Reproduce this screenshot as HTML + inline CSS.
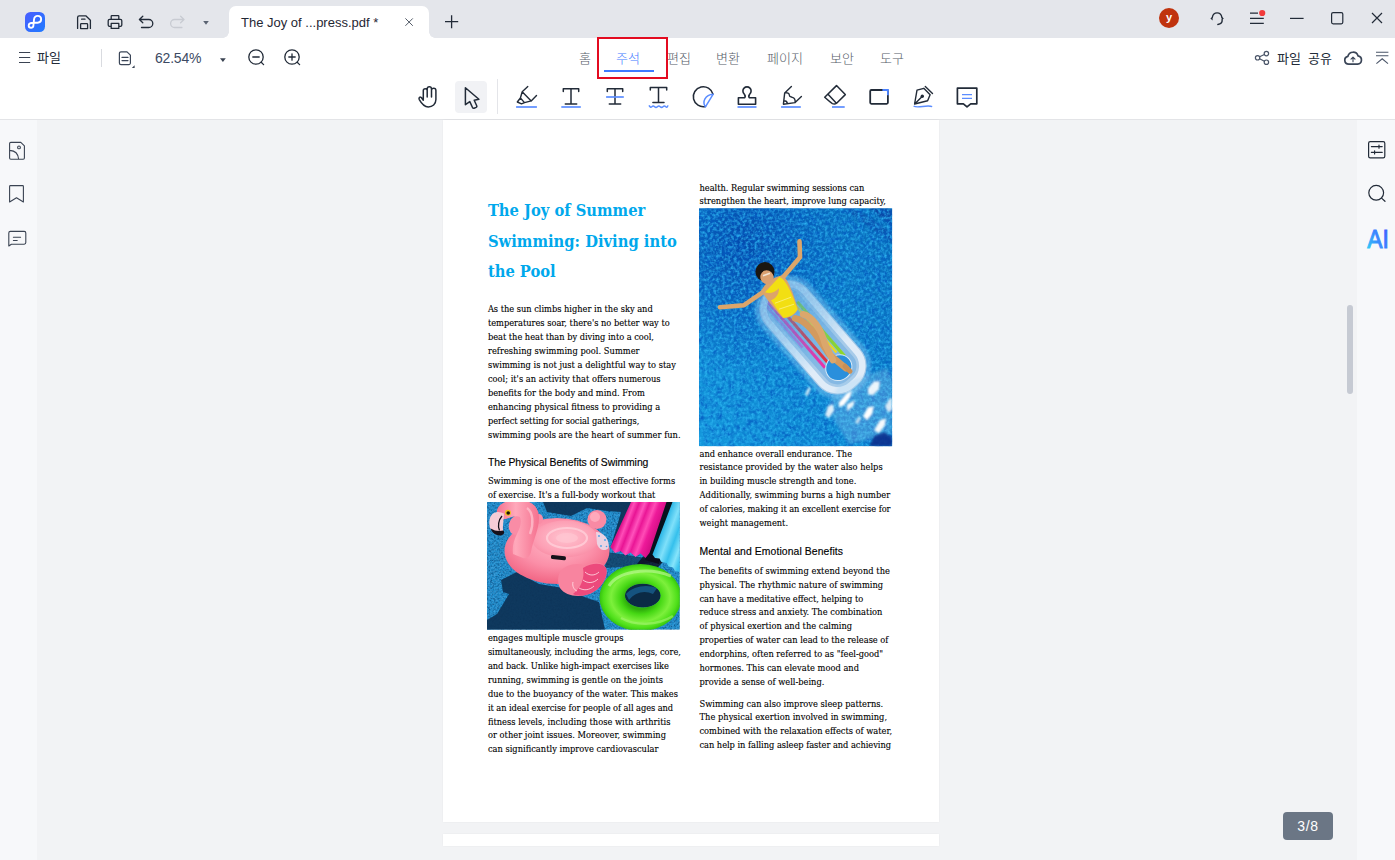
<!DOCTYPE html>
<html lang="ko">
<head>
<meta charset="utf-8">
<title>The Joy of Summer Swimming - PDF</title>
<style>
*{box-sizing:border-box;margin:0;padding:0}
html,body{width:1395px;height:860px;overflow:hidden;background:#f2f3f5}
body{position:relative;font-family:"Liberation Sans","Noto Sans CJK KR",sans-serif;color:#222b38}
.abs{position:absolute}
svg{position:absolute;overflow:visible}
svg svg{position:static;overflow:hidden}
.ic{fill:none;stroke:#222b38;stroke-width:1.5;stroke-linecap:round;stroke-linejoin:round}
.bl{fill:none;stroke:#5b8dff;stroke-width:1.7;stroke-linecap:butt;stroke-linejoin:round}
#titlebar{left:0;top:0;width:1395px;height:38px;background:#e4e6eb}
#tab{left:229px;top:6px;width:200px;height:32px;background:#fff;border-radius:7px 7px 0 0}
#tab:before,#tab:after{content:"";position:absolute;bottom:0;width:6px;height:6px;background:radial-gradient(circle at 0 0,rgba(255,255,255,0) 5.5px,#fff 6px)}
#tab:before{left:-6px}
#tab:after{right:-6px;background:radial-gradient(circle at 100% 0,rgba(255,255,255,0) 5.5px,#fff 6px)}
#tabtitle{left:241px;top:15px;font-size:13px;line-height:16px;color:#1f2733;white-space:nowrap}
#menubar{left:0;top:38px;width:1395px;height:81px;background:#fff}
#tbline{left:0;top:119px;width:1395px;height:1px;background:#e3e4e7}
#leftbar{left:0;top:120px;width:37px;height:740px;background:#f7f8fa}
#rightbar{left:1357px;top:120px;width:38px;height:740px;background:#f7f8fa}
.ko{font-family:"Liberation Sans","Noto Sans CJK KR",sans-serif;font-size:13px;line-height:16px;white-space:nowrap}
.menu{top:51px;color:#555c68;font-weight:300}
#page{left:443px;top:120px;width:496.4px;height:702px;background:#fff;box-shadow:0 0 2px rgba(0,0,0,.05)}
#page2{left:443px;top:834px;width:496.4px;height:12px;background:#fff;box-shadow:0 0 2px rgba(0,0,0,.05)}
#scroll{left:1347px;top:305px;width:6px;height:89px;border-radius:3px;background:#c6cad3}
#badge{left:1283px;top:812px;width:50px;height:28px;border-radius:4px;background:#6b7685;color:#fff;font-size:14px;line-height:28px;text-align:center;letter-spacing:.6px}
#redbox{left:597px;top:37px;width:71px;height:42px;border:2px solid #e30b20}
#selbg{left:455px;top:81px;width:32px;height:32px;border-radius:4px;background:#f1f2f5}
#tsep{left:497px;top:79px;width:1px;height:35px;background:#e4e5e9}
#msep{left:101px;top:49px;width:1px;height:18px;background:#d9dbe0}
#avatar{left:1159px;top:8px;width:20px;height:20px;border-radius:50%;background:#c0330e;color:#fff;font-size:11px;font-weight:bold;line-height:18px;text-align:center}
</style>
</head>
<body>
<div id="titlebar" class="abs"></div>
<div id="tab" class="abs"></div>
<div id="tabtitle" class="abs">The Joy of ...press.pdf *</div>
<div id="menubar" class="abs"></div>
<div id="tbline" class="abs"></div>
<div id="leftbar" class="abs"></div>
<div id="rightbar" class="abs"></div>
<div id="page" class="abs"></div>
<div id="page2" class="abs"></div>
<div id="scroll" class="abs"></div>
<div id="badge" class="abs">3/8</div>
<div id="avatar" class="abs">y</div>
<div id="msep" class="abs"></div>
<div id="selbg" class="abs"></div>
<div id="tsep" class="abs"></div>

<!-- menu labels -->
<div class="abs ko" style="left:37px;top:50px;color:#222b38">파일</div>
<div class="abs" style="left:155px;top:49px;font-size:14px;line-height:18px;letter-spacing:-.2px;color:#3c4a63">62.54%</div>
<div class="abs ko menu" style="left:579px">홈</div>
<div class="abs ko menu" style="left:616px;color:#3f7bff">주석</div>
<div class="abs" style="left:604px;top:70px;width:50px;height:2px;background:#3f7bff"></div>
<div class="abs ko menu" style="left:667px">편집</div>
<div class="abs ko menu" style="left:716px">변환</div>
<div class="abs ko menu" style="left:767px">페이지</div>
<div class="abs ko menu" style="left:830px">보안</div>
<div class="abs ko menu" style="left:880px">도구</div>
<div class="abs ko" style="left:1277px;top:51px;color:#222b38;word-spacing:3.5px">파일 공유</div>
<div id="redbox" class="abs"></div>

<!--ICONS_START-->
<svg id="topicons" width="1395" height="120" viewBox="0 0 1395 120" style="left:0;top:0">
<defs>
<linearGradient id="lg" x1="0" y1="0" x2="1" y2="1"><stop offset="0" stop-color="#4a5dff"/><stop offset="1" stop-color="#1f7bff"/></linearGradient>
<linearGradient id="aig" x1="1" y1=".2" x2="0" y2="1"><stop offset="0" stop-color="#3d5cff"/><stop offset=".45" stop-color="#3a86ff"/><stop offset=".8" stop-color="#34b8f8"/><stop offset="1" stop-color="#2fe0f0"/></linearGradient>
</defs>
<!-- logo -->
<rect x="25" y="12" width="20" height="20" rx="5.5" fill="url(#lg)"/>
<path d="M33.4 25.4C33.4 28.6 28.7 28.4 28.7 25.4C28.7 23.2 30.8 22.7 33.4 22.7L37.6 22.7C42.3 22.7 42.3 15.9 37.8 15.9C35 15.9 34.2 17.6 34 19.6Z" fill="none" stroke="#fff" stroke-width="1.9" stroke-linejoin="round"/>
<!-- save -->
<path class="ic" d="M77.6 28.4V17.4a1.6 1.6 0 0 1 1.6-1.6h6.6l4.6 4.4v8.2" style="stroke-width:1.3"/>
<path class="ic" d="M80.6 28.6v-4.2a.8.8 0 0 1 .8-.8h5.4a.8.8 0 0 1 .8.8v4.2zM81.6 19.2h3.4" style="stroke-width:1.3"/>
<!-- print -->
<path class="ic" d="M111.2 19.4v-3.2a.6.6 0 0 1 .6-.6h6.4a.6.6 0 0 1 .6.6v3.2M111 26.4h-1.4a1.4 1.4 0 0 1-1.4-1.4v-4.2a1.4 1.4 0 0 1 1.4-1.4h10.800000000000001a1.4 1.4 0 0 1 1.4 1.4v4.200000000000001a1.4 1.4 0 0 1-1.4 1.4h-1.4M111.2 23.4h7.6v5h-7.6z" style="stroke-width:1.3"/>
<!-- undo -->
<path class="ic" d="M142.8 16.2l-3.4 3.3 3.4 3.3M139.600 19.5h9.200a4 4 0 0 1 0 8h-7.300" style="stroke-width:1.3"/>
<!-- redo (disabled) -->
<path class="ic" d="M180.6 16.2l3.4 3.3-3.4 3.3M183.8 19.5h-9.200a4 4 0 0 0 0 8h7.300" style="stroke:#c8cbd2;stroke-width:1.3"/>
<path d="M203.200 21.100h5.600l-2.800 3.700z" fill="#5a6372"/>
<!-- tab close, plus -->
<path d="M405.400 18.400l7.400 7.400M412.800 18.400l-7.400 7.400" stroke="#4a5260" stroke-width=".95" fill="none"/>
<path d="M445 21.700h13.200M451.600 15.200v13" stroke="#222b38" stroke-width="1.300" fill="none"/>
<!-- headset -->
<path class="ic" d="M1212.300 17.400a4.900 5.600 0 0 1 9.600 0M1222.200 19.800c.2 2.600-1.600 4.400-4.400 4.700" style="stroke-width:1.300"/>
<path d="M1212.600 16.600l-2.200 1.900 2.200 1.900zM1221.600 16.600l2.200 1.900-2.200 1.900z" fill="#222b38"/>
<!-- menu -->
<path d="M1250 13.200h8M1250 18.300h13.800M1250 23.400h13.800" stroke="#222b38" stroke-width="1.300" fill="none"/>
<circle cx="1262.200" cy="13" r="3.100" fill="#f23b3b"/>
<!-- window controls -->
<path d="M1290 18.400h13.600" stroke="#222b38" stroke-width="1.200" fill="none"/>
<rect x="1331.600" y="12.600" width="11.200" height="11.200" rx="1.500" fill="none" stroke="#222b38" stroke-width="1.200"/>
<path d="M1372 13l10 10M1382 13l-10 10" stroke="#222b38" stroke-width="1.200" fill="none"/>

<!-- hamburger -->
<path d="M19 52.500h11.200M19 57.500h11.200M19 62.500h11.200" stroke="#3a4352" stroke-width="1.100" fill="none"/>
<!-- page icon -->
<path class="ic" d="M119.400 53.400a1.600 1.600 0 0 1 1.600-1.600h6l3.400 3.400v7.800a1.600 1.600 0 0 1-1.600 1.600h-7.800a1.600 1.600 0 0 1-1.600-1.600zM122 57.400h6M122 60.600h6" style="stroke:#3a4557;stroke-width:1.200"/>
<path d="M134.600 65.200v2.800h-2.800z" fill="#3a4557"/>
<path d="M220 58.200h5.800l-2.900 3.700z" fill="#3a4352"/>
<!-- zoom out / in -->
<circle cx="256" cy="57" r="7.200" class="ic" style="stroke-width:1.300"/>
<path class="ic" d="M261.200 62.300l2.400 2.300M252.800 57h6.400" style="stroke-width:1.300"/>
<circle cx="292" cy="57" r="7.200" class="ic" style="stroke-width:1.300"/>
<path class="ic" d="M297.200 62.300l2.400 2.300M288.800 57h6.400M292 53.800v6.400" style="stroke-width:1.300"/>
<!-- share -->
<g class="ic" style="stroke:#4a5568;stroke-width:1.200"><circle cx="1266.400" cy="53.600" r="2.200"/><circle cx="1257.600" cy="57.800" r="2.200"/><circle cx="1266.400" cy="62.200" r="2.200"/><path d="M1259.600 56.800l4.800-2.300M1259.600 58.800l4.800 2.400"/></g>
<!-- cloud -->
<path class="ic" d="M1348.800 64.200a4 4 0 0 1-.9-7.900a5.300 5.300 0 0 1 10.200-.4a4.200 4.200 0 0 1-.5 8.300z" style="stroke:#3a4557;stroke-width:1.700"/>
<path class="ic" d="M1353 61.800v-4.200M1351 59.200l2-2 2 2" style="stroke:#3a4557;stroke-width:1.100"/>
<!-- collapse -->
<path d="M1376 52.300h12.400M1376 55.700h12.400M1376.400 63.600l5.800-4.800 5.800 4.800" stroke="#4a5568" stroke-width="1.100" fill="none"/>

<!-- hand -->
<path class="ic" d="M423.300 99.400V90.600a1.950 1.950 0 0 1 3.900 0V89a2.150 2.150 0 0 1 4.300 0V90.400a2.200 2.200 0 0 1 4.400 0V99.400C435.900 104.200 432.400 106.900 428.300 106.900C424.200 106.900 422 104.400 419.300 99.600C418.300 97.600 420.300 96.200 421.500 97.800L423.300 100.200M427.200 90.600V97M431.500 89.400V97" style="stroke-width:1.500"/>
<!-- pointer -->
<path class="ic" d="M465.400 87.700L465.400 104.700L469.800 101.600L472.500 107.500Q473 108.600 474.100 108.200L476.100 107.400Q477.200 106.900 476.700 105.800L474.200 100.300L478.900 99.300Z" style="stroke-width:1.500"/>
<!-- highlighter -->
<path class="ic" d="M527.800 86.600L522.200 91.700L531.200 100.900L536.500 95.400M522.200 91.700L520.400 98L524.500 102.600L531.200 100.900M520.400 98L517.300 102L521.500 103.800L524.500 102.600" style="stroke-width:1.400"/>
<path class="bl" d="M516.100 107h20.800"/>
<!-- underline T -->
<path class="ic" d="M563.300 91.400V88.800H578.700V91.400M571 88.800V104M565.300 104H576.700" style="stroke-width:1.500"/>
<path class="bl" d="M561.300 107h19.500"/>
<!-- strike T -->
<path class="ic" d="M607.300 91.400V88.800H622.700V91.400M615 88.800V104M609.300 104H620.700" style="stroke-width:1.500"/>
<path class="bl" d="M606.100 97h17.700"/>
<!-- squiggly T -->
<path class="ic" d="M650.300 90V87.400H666.700V90M658.500 87.400V102.600M652.900 102.600H664" style="stroke-width:1.500"/>
<path class="bl" d="M649 105.400q1.400 2.600 2.800 1.300t2.800 0q1.400 1.300 2.800 0t2.800 0q1.400 1.300 2.800 0t2.800 0q1.400 1.300 2.200-1.300" style="stroke-width:1.500"/>
<!-- sticker -->
<path class="ic" d="M713 94.300A10 10 0 1 0 705.500 106.500" style="stroke-width:1.500"/>
<path class="bl" d="M713.200 94.200L705.400 106.900C702 102 705 94.600 713.200 94.200Z" style="stroke-width:1.500"/>
<!-- stamp -->
<path class="ic" d="M744.600 97.800C746 96 745.200 95.200 744.200 94A4.100 4.100 0 1 1 749.800 94C748.800 95.200 748 96 749.400 97.800H755.600V104.200H738.400V97.800Z" style="stroke-width:1.600"/>
<path class="bl" d="M737.500 107h19"/>
<!-- pencil -->
<path class="ic" d="M791.400 86.600L784.700 92.900L783.400 104.200L795.100 102.600L801.400 96.600M784.700 92.900C787.500 92.300 789.300 93.200 789.300 95C789.300 97.200 791 96.800 792.400 97.300C794.800 98 795.400 100 795.100 102.600M784 100.800C785.800 100.800 787.200 102 787.400 103.600" style="stroke-width:1.400"/>
<path class="bl" d="M781.100 107h19.700"/>
<!-- eraser -->
<path class="ic" d="M836.500 85.600L845.300 94.600L836.600 103.200Q834.600 104.600 832.400 103.600Q831 102.900 824.700 97.300ZM828.500 94.800L836.400 103.200" style="stroke-width:1.500"/>
<path class="bl" d="M832 107h12.700"/>
<!-- rectangle -->
<rect x="870.200" y="90" width="17.700" height="13.800" rx="1.200" class="ic" style="stroke-width:1.800"/>
<path d="M882.400 90H887.900V95.200" fill="none" stroke="#4b82ff" stroke-width="1.800"/>
<!-- pen -->
<path class="ic" d="M914.600 104L917 90.200L923.800 88.300L930.100 94.800L927.600 100.800ZM914.900 103.700L921.400 97.200M925.300 86.400L932.500 93.400" style="stroke-width:1.400"/>
<circle cx="922.300" cy="96.200" r="1.700" fill="#222b38"/>
<path class="bl" d="M913.600 106.200C918 108.400 927 104.600 932.200 106.600" style="stroke-width:1.400"/>
<!-- comment -->
<path class="ic" d="M957.400 88.200H976.800V103.800H970.700L967 106.800L963.400 103.800H957.400Z" style="stroke-width:1.700"/>
<path class="bl" d="M962 94.600h10M962 98.300h10" style="stroke-width:1.300"/>
</svg>

<svg id="sideicons" width="1395" height="140" viewBox="0 130 1395 140" style="left:0;top:130px">
<!-- thumbnails -->
<path class="ic" d="M9.600 143.600a1.200 1.200 0 0 1 1.200-1.200h10l3.600 3.400v12.200a1.200 1.200 0 0 1-1.200 1.200h-12.400a1.200 1.200 0 0 1-1.200-1.200zM9.800 150.400c5 .4 8.400 3.800 8.800 8.600" style="stroke:#3a4352;stroke-width:1.100"/>
<circle cx="19" cy="147.400" r="1.400" class="ic" style="stroke:#3a4352;stroke-width:1.100"/>
<!-- bookmark -->
<path class="ic" d="M9.600 186.400a.8.800 0 0 1 .8-.8h12.200a.8.800 0 0 1 .8.800v15.600l-6.900-4.200-6.900 4.200z" style="stroke:#3a4352;stroke-width:1.100"/>
<!-- comment -->
<path class="ic" d="M8.800 233a1.600 1.600 0 0 1 1.600-1.600h13.800a1.600 1.600 0 0 1 1.600 1.600v9.600a1.600 1.600 0 0 1-1.600 1.600h-12.800l-2.600 1.800zM13.400 237.300h7.200M13.400 240.500h3.800" style="stroke:#3a4352;stroke-width:1.100"/>
<!-- settings -->
<rect x="1368.600" y="141.600" width="16.200" height="16.200" rx="1.600" class="ic" style="stroke-width:1.200"/>
<path class="ic" d="M1371.400 146.600h10.800M1379 145v3.200M1371.400 152.400h10.800M1374.600 150.800v3.200" style="stroke-width:1.200"/>
<!-- search -->
<circle cx="1376.200" cy="192.800" r="7.400" class="ic" style="stroke-width:1.200"/>
<path class="ic" d="M1381.800 198.400l3.200 2.900" style="stroke-width:1.200"/>
<!-- AI -->
<text x="1367.300" y="247.800" font-family="'Liberation Sans',sans-serif" font-size="26.500" fill="url(#aig)" stroke="url(#aig)" stroke-width="1" textLength="21.500" lengthAdjust="spacingAndGlyphs">AI</text>
</svg>

<!--ICONS_END-->
<!--PAGECONTENT_START-->
<svg id="pagesvg" width="496.4" height="702" viewBox="443 120 496.4 702" style="left:443px;top:120px">
<style>.b{font-family:'DejaVu Serif','Liberation Serif',serif;font-size:8.3px;fill:#000;stroke:#000;stroke-width:.12px}.h{font-family:"Liberation Sans",sans-serif;font-size:10.4px;fill:#000;stroke:#000;stroke-width:.15px}.t{font-family:"DejaVu Serif","Liberation Serif",serif;font-weight:bold;font-size:16.7px;fill:#00a8ec}</style>
<text class="t" x="487.9" y="215.8" textLength="157.4" lengthAdjust="spacingAndGlyphs">The Joy of Summer</text>
<text class="t" x="487.9" y="246.7" textLength="188.9" lengthAdjust="spacingAndGlyphs">Swimming: Diving into</text>
<text class="t" x="487.9" y="277.5" textLength="67.8" lengthAdjust="spacingAndGlyphs">the Pool</text>
<text class="b" x="487.9" y="312.2" textLength="164.8">As the sun climbs higher in the sky and</text>
<text class="b" x="487.9" y="326.1" textLength="181.8">temperatures soar, there's no better way to</text>
<text class="b" x="487.9" y="340.1" textLength="166.1">beat the heat than by diving into a cool,</text>
<text class="b" x="487.9" y="354.0" textLength="151.7">refreshing swimming pool. Summer</text>
<text class="b" x="487.9" y="367.9" textLength="188.0">swimming is not just a delightful way to stay</text>
<text class="b" x="487.9" y="381.9" textLength="172.7">cool; it's an activity that offers numerous</text>
<text class="b" x="487.9" y="395.8" textLength="156.9">benefits for the body and mind. From</text>
<text class="b" x="487.9" y="409.7" textLength="172.2">enhancing physical fitness to providing a</text>
<text class="b" x="487.9" y="423.6" textLength="151.4">perfect setting for social gatherings,</text>
<text class="b" x="487.9" y="437.6" textLength="192.7">swimming pools are the heart of summer fun.</text>
<text class="h" x="487.9" y="466.1" textLength="160.5">The Physical Benefits of Swimming</text>
<text class="b" x="487.9" y="484.3" textLength="187.3">Swimming is one of the most effective forms</text>
<text class="b" x="487.9" y="498.2" textLength="167.5">of exercise. It's a full-body workout that</text>
<text class="b" x="487.9" y="641.0" textLength="135.6">engages multiple muscle groups</text>
<text class="b" x="487.9" y="654.9" textLength="193.1">simultaneously, including the arms, legs, core,</text>
<text class="b" x="487.9" y="668.9" textLength="181.1">and back. Unlike high-impact exercises like</text>
<text class="b" x="487.9" y="682.8" textLength="175.1">running, swimming is gentle on the joints</text>
<text class="b" x="487.9" y="696.7" textLength="190.1">due to the buoyancy of the water. This makes</text>
<text class="b" x="487.9" y="710.6" textLength="185.3">it an ideal exercise for people of all ages and</text>
<text class="b" x="487.9" y="724.6" textLength="182.6">fitness levels, including those with arthritis</text>
<text class="b" x="487.9" y="738.5" textLength="178.1">or other joint issues. Moreover, swimming</text>
<text class="b" x="487.9" y="752.4" textLength="170.6">can significantly improve cardiovascular</text>
<text class="b" x="699.5" y="190.6" textLength="164.8">health. Regular swimming sessions can</text>
<text class="b" x="699.5" y="204.5" textLength="186.4">strengthen the heart, improve lung capacity,</text>
<text class="b" x="699.5" y="456.6" textLength="152.6">and enhance overall endurance. The</text>
<text class="b" x="699.5" y="470.5" textLength="183.2">resistance provided by the water also helps</text>
<text class="b" x="699.5" y="484.5" textLength="156.9">in building muscle strength and tone.</text>
<text class="b" x="699.5" y="498.4" textLength="190.8">Additionally, swimming burns a high number</text>
<text class="b" x="699.5" y="512.3" textLength="191.1">of calories, making it an excellent exercise for</text>
<text class="b" x="699.5" y="526.2" textLength="88.6">weight management.</text>
<text class="h" x="699.5" y="555.1" textLength="143.5">Mental and Emotional Benefits</text>
<text class="b" x="699.5" y="573.7" textLength="190.5">The benefits of swimming extend beyond the</text>
<text class="b" x="699.5" y="587.6" textLength="183.7">physical. The rhythmic nature of swimming</text>
<text class="b" x="699.5" y="601.6" textLength="163.7">can have a meditative effect, helping to</text>
<text class="b" x="699.5" y="615.5" textLength="182.9">reduce stress and anxiety. The combination</text>
<text class="b" x="699.5" y="629.4" textLength="152.6">of physical exertion and the calming</text>
<text class="b" x="699.5" y="643.4" textLength="188.9">properties of water can lead to the release of</text>
<text class="b" x="699.5" y="657.3" textLength="183.7">endorphins, often referred to as &quot;feel-good&quot;</text>
<text class="b" x="699.5" y="671.2" textLength="159.5">hormones. This can elevate mood and</text>
<text class="b" x="699.5" y="685.1" textLength="124.9">provide a sense of well-being.</text>
<text class="b" x="699.5" y="706.6" textLength="183.7">Swimming can also improve sleep patterns.</text>
<text class="b" x="699.5" y="720.5" textLength="187.6">The physical exertion involved in swimming,</text>
<text class="b" x="699.5" y="734.5" textLength="192.7">combined with the relaxation effects of water,</text>
<text class="b" x="699.5" y="748.4" textLength="191.6">can help in falling asleep faster and achieving</text>
<!--IMG1S--><svg x="699" y="208.2" width="193.2" height="238.1" viewBox="0 0 193.2 238.1" preserveAspectRatio="none" overflow="hidden">
<defs>
<linearGradient id="w1" x1="0" y1="1" x2="1" y2=".1"><stop offset="0" stop-color="#1497dc"/><stop offset=".45" stop-color="#0c83cf"/><stop offset="1" stop-color="#086cbc"/></linearGradient>
<radialGradient id="w1b" cx=".22" cy=".15" r=".55"><stop offset="0" stop-color="#033fa6" stop-opacity=".85"/><stop offset=".6" stop-color="#0447ae" stop-opacity=".4"/><stop offset="1" stop-color="#0447ae" stop-opacity="0"/></radialGradient>
<filter id="wn1" x="0" y="0" width="100%" height="100%" color-interpolation-filters="sRGB">
<feTurbulence type="fractalNoise" baseFrequency="0.17" numOctaves="2" seed="5" result="n1"/>
<feTurbulence type="fractalNoise" baseFrequency="0.34" numOctaves="2" seed="9" result="n2"/>
<feColorMatrix in="n2" type="matrix" values="0 0 0 0 .18  0 0 0 0 .72  0 0 0 0 .95  1.9 0 0 0 -0.74" result="lt"/>
<feColorMatrix in="n1" type="matrix" values="0 0 0 0 .02  0 0 0 0 .36  0 0 0 0 .76  0 1.9 0 0 -0.74" result="dk"/>
<feMerge><feMergeNode in="dk"/><feMergeNode in="lt"/></feMerge>
</filter>
<filter id="bl1" x="-20%" y="-20%" width="140%" height="140%"><feGaussianBlur stdDeviation="1.6"/></filter>
<filter id="bl2" x="-30%" y="-30%" width="160%" height="160%"><feGaussianBlur stdDeviation=".9"/></filter>
<linearGradient id="fm" gradientUnits="userSpaceOnUse" x1="-58" y1="0" x2="72" y2="0"><stop offset="0" stop-color="#fff" stop-opacity=".35"/><stop offset=".35" stop-color="#fff" stop-opacity=".6"/><stop offset=".7" stop-color="#fff" stop-opacity="1"/></linearGradient><mask id="fmk" maskUnits="userSpaceOnUse" x="-70" y="-40" width="160" height="80"><rect x="-70" y="-40" width="160" height="80" fill="url(#fm)"/></mask><clipPath id="fc"><rect x="-58" y="-28" width="130" height="55" rx="25"/></clipPath>
</defs>
<rect width="193.2" height="238.1" fill="url(#w1)"/>
<rect width="193.2" height="238.1" fill="url(#w1b)"/>
<path d="M143 0H157L193.200 25V35Z" fill="#0a46a8" opacity=".55" filter="url(#bl2)"/>
<path d="M170 0H193.200V18Z" fill="#08379a" opacity=".65" filter="url(#bl2)"/>
<rect width="193.200" height="238.100" filter="url(#wn1)"/>
<!-- float glow -->
<g transform="translate(109 124) rotate(49)">
<rect x="-63" y="-33" width="140" height="65" rx="30" fill="#7cc4f2" opacity=".5" filter="url(#bl1)"/>
<g mask="url(#fmk)"><rect x="-58" y="-28" width="130" height="55" rx="25" fill="#b9d6ee"/>
<g clip-path="url(#fc)">
<rect x="-58" y="-28" width="130" height="55" fill="#a8cbe9"/>
<rect x="-50" y="-18" width="112" height="35" rx="14" fill="#86b9e4"/>
<rect x="-50" y="9" width="88" height="3" fill="#e832a8"/>
<rect x="-40" y="3.500" width="82" height="3" fill="#e0323e"/>
<rect x="-30" y="-13.500" width="72" height="3.200" fill="#8ed62a"/>
<rect x="-30" y="-9.500" width="64" height="2.600" fill="#f0d820"/>
<rect x="-52" y="13" width="60" height="2.500" fill="#b46ad8" opacity=".8"/>
<ellipse cx="47" cy="0" rx="12.500" ry="13.500" fill="#2a8fdc"/>
<ellipse cx="47" cy="0" rx="12.500" ry="13.500" fill="none" stroke="#d6e8f6" stroke-width="1"/>
</g>
<rect x="-54.500" y="-24.500" width="123" height="48" rx="21.500" fill="none" stroke="#e6f0f9" stroke-width="7" opacity=".9"/>
<rect x="-58" y="-28" width="130" height="55" rx="25" fill="none" stroke="#9cc4e6" stroke-width="1.200" opacity=".9"/>
</g></g>
<!-- woman -->
<g stroke-linecap="round" stroke-linejoin="round" fill="none">
<path d="M96 110C108 112 118 128 130 146L147 160" stroke="#d39a5e" stroke-width="6.500"/>
<path d="M104 106C113 108 122 120 126 136L134 152" stroke="#dba76c" stroke-width="6.500"/>
<path d="M146 158l5 5" stroke="#c98f55" stroke-width="5"/>
<path d="M84 69L101 49L100.500 33" stroke="#dca56a" stroke-width="4.600"/>
<path d="M64 84L45 97L21 99" stroke="#dca56a" stroke-width="4.600"/>
</g>
<path d="M62 83C66 74 76 68 84 67C90 74 94 84 99 101C96 107 90 110 84 110C78 104 70 94 62 83Z" fill="#dca56a"/>
<path d="M66 84L80.500 68.500L84 71C90 78 94 88 98.500 101C95.500 106.500 90 109 84.500 109.500C80 104 75 97 72 92C77 90 80 86 80 80C76 84 71 86 66 84Z" fill="#f2df12"/>
<path d="M76 95l16-6M80 101l15-5" stroke="#f8ee70" stroke-width="1" fill="none"/>
<circle cx="66" cy="63.500" r="9.600" fill="#1b1611"/>
<ellipse cx="68" cy="69" rx="6.600" ry="7" fill="#d9a070" transform="rotate(-25 68 69)"/>
<path d="M64 67.500l7-2.500" stroke="#f1e4d4" stroke-width="1.600" fill="none"/>
<!-- glints -->
<path d="M140 176L188 160L193.200 170V226L150 236L128 200Z" fill="#9fd0f2" opacity=".3" filter="url(#bl1)"/>
<g fill="#fff" filter="url(#bl2)">
<path d="M106 186l4-8 1.500 3-3 7z" opacity=".8"/>
<path d="M140 194l8-9 5-3-2 7-6 8-5 2z"/>
<path d="M148 196l8-4-2 6-6 5z" opacity=".9"/>
<path d="M126 207l3-9 5-2 1 6-5 8z" opacity=".85"/>
<path d="M169 180l6-7 6 0-1 8-6 6-5-1z" opacity=".9"/>
<path d="M164 208l5-9 6-1-2 8-5 6z"/>
<path d="M175 222l6-10 6-2-1 7-6 8z" opacity=".95"/>
<path d="M186 198l5-8 2 0 0 12-4 2z" opacity=".8"/>
<path d="M156 214l4-6 2 2-3 6z" opacity=".7"/>
</g>
<path d="M170 238.100l5-10 10-4 8.200 5v9z" fill="#0a2f8c" opacity=".9" filter="url(#bl2)"/>
</svg>
<!--IMG1E-->
<!--IMG2S--><svg x="487" y="502" width="192.800" height="127.700" viewBox="0 0 192.800 127.700" preserveAspectRatio="none" overflow="hidden">
<defs>
<filter id="wn2" x="0" y="0" width="100%" height="100%" color-interpolation-filters="sRGB">
<feTurbulence type="fractalNoise" baseFrequency="0.55" numOctaves="2" seed="11" result="n"/>
<feColorMatrix in="n" type="matrix" values="0 0 0 0 .35  0 0 0 0 .70  0 0 0 0 .92  1.8 0 0 0 -0.72" result="lt"/>
<feColorMatrix in="n" type="matrix" values="0 0 0 0 .02  0 0 0 0 .18  0 0 0 0 .36  0 1.8 0 0 -0.70" result="dk"/>
<feMerge><feMergeNode in="dk"/><feMergeNode in="lt"/></feMerge>
</filter>
<filter id="b2a" x="-20%" y="-20%" width="140%" height="140%"><feGaussianBlur stdDeviation="1.8"/></filter>
<filter id="b2b" x="-20%" y="-20%" width="140%" height="140%"><feGaussianBlur stdDeviation=".7"/></filter>
<radialGradient id="pk" cx=".5" cy=".38" r=".65"><stop offset="0" stop-color="#ffb6c6"/><stop offset=".55" stop-color="#fb8fa8"/><stop offset="1" stop-color="#f0607f"/></radialGradient>
<radialGradient id="pk2" cx=".5" cy=".45" r=".6"><stop offset="0" stop-color="#ffc4d0"/><stop offset=".7" stop-color="#fda0b5"/><stop offset="1" stop-color="#f88aa3"/></radialGradient>
<linearGradient id="nk" x1="0" y1="0" x2="1" y2="0"><stop offset="0" stop-color="#f5718f"/><stop offset=".45" stop-color="#ffa9bb"/><stop offset="1" stop-color="#f5718f"/></linearGradient>
<radialGradient id="gr" cx=".5" cy=".5" r=".5"><stop offset=".36" stop-color="#2fae0c"/><stop offset=".5" stop-color="#46d814"/><stop offset=".72" stop-color="#7df03c"/><stop offset=".9" stop-color="#4fe01a"/><stop offset="1" stop-color="#36c20e"/></radialGradient>
<linearGradient id="mg" gradientUnits="userSpaceOnUse" x1="143" y1="0" x2="181" y2="0" gradientTransform="skewX(-21)"><stop offset="0" stop-color="#e0128c"/><stop offset=".12" stop-color="#ff4db8"/><stop offset=".25" stop-color="#e81494"/><stop offset=".4" stop-color="#ff52bc"/><stop offset=".52" stop-color="#ea1696"/><stop offset=".68" stop-color="#ff4cb6"/><stop offset=".8" stop-color="#ee1a9a"/><stop offset="1" stop-color="#d60f86"/></linearGradient>
<linearGradient id="cy" gradientUnits="userSpaceOnUse" x1="185" y1="0" x2="215" y2="0" gradientTransform="skewX(-20)"><stop offset="0" stop-color="#2bb6e6"/><stop offset=".3" stop-color="#7fe0fa"/><stop offset=".55" stop-color="#35c0ec"/><stop offset=".8" stop-color="#86e4fb"/><stop offset="1" stop-color="#3ac4ee"/></linearGradient>
</defs>
<rect width="192.800" height="127.700" fill="#1f8ccb"/>
<rect width="192.800" height="127.700" filter="url(#wn2)" opacity=".7"/>
<!-- shadows -->
<g fill="#0a3356" filter="url(#b2b)" opacity=".93">
<path d="M56 0H148L143 10L136 24L128 40L124 44L130 24L134 10L120 9L100 6L84 14L60 10Z"/>
<path d="M14 78L30 70L52 82L76 86L100 96L112 100L118 127.700H0V118L10 112L22 92L16 90Z"/>
<path d="M120 50L172 58L150 64L118 66Z" opacity=".8"/>
</g>
<!-- mats -->
<path d="M176 0H190L172 62L158 58Z" fill="#07111c"/>
<path d="M160 50L176 60L166 70L150 62Z" fill="#07111c" opacity=".8" filter="url(#b2b)"/>
<path d="M185.500 0H192.800V70L188 69L186 65.500L181.500 64.500L179.500 61L174.500 60L172.500 56.500L168 56L165.500 52.500Z" fill="url(#cy)"/>
<path d="M144 0H179.500L162.500 51L158.500 56L153.500 51.500L148.500 55L143.500 50.500L138.500 53.500L133.500 49L128 51L123.400 45Z" fill="url(#mg)"/>
<!-- flamingo body -->
<ellipse cx="70" cy="49" rx="52.500" ry="33" fill="url(#pk)"/>
<ellipse cx="110" cy="17.500" rx="9.500" ry="9.500" fill="#f98aa4"/>
<ellipse cx="108" cy="15" rx="5" ry="5" fill="#ffb0c0" opacity=".8"/>
<ellipse cx="78" cy="37" rx="33" ry="18.500" fill="url(#pk2)"/>
<ellipse cx="80" cy="36" rx="20" ry="10" fill="none" stroke="#ffd0da" stroke-width="2.200" opacity=".8"/>
<ellipse cx="80" cy="36" rx="11" ry="5" fill="#ffc6d2" opacity=".7"/>
<path d="M109 30C117 30 123 38 121.500 46C118 50 112 48 110 42Z" fill="#ecd2e2"/>
<g fill="#4aa0e8"><circle cx="112" cy="34" r=".9"/><circle cx="118" cy="38" r=".9"/><circle cx="114" cy="44" r=".9"/><circle cx="119.500" cy="44.500" r=".8"/></g>
<rect x="64" y="53.500" width="15" height="4.200" rx="1.600" fill="#15121a" transform="rotate(6 71 55)"/>
<!-- little wing near neck -->
<ellipse cx="30" cy="23" rx="8" ry="10" fill="#f98ca6" transform="rotate(20 30 23)"/>
<ellipse cx="52" cy="17" rx="4" ry="5" fill="#f98ca6"/>
<!-- neck + head -->
<path d="M10 8C12 1 22 -3 34 -2C46 -1 52 6 52 16C52 28 46 38 44 50C43 54 40 57 36 56L26 52C25 44 27 38 30 32C33 26 35 20 33 15C30 13 24 15 19 17C14 18 9 14 10 8Z" fill="url(#nk)"/>
<path d="M40 6C46 10 47 22 43 32" stroke="#ffc2cf" stroke-width="2.400" fill="none" opacity=".75" filter="url(#b2b)"/>
<path d="M3 16C5 10 11 8.500 17 11.500C17 18 15 25 16.500 30.500C11 32 5 30 3 26C2 22 2 19 3 16Z" fill="#f6ccd6"/>
<path d="M3.600 26.500C8 29 12 29.500 16.500 28.500C18 30.500 17 33 13.500 33.500C9 33.500 5 31 3.600 26.500Z" fill="#16101a"/>
<path d="M15 14C11.500 18 10.500 24 12.500 28.500" stroke="#16101a" stroke-width="1.300" fill="none"/>
<circle cx="21" cy="10.800" r="3" fill="#f1c21c"/><circle cx="21.200" cy="11" r="1.800" fill="#1a1208"/>
<!-- wing -->
<path d="M73 70C78 62 92 60 98 64C106 58 116 60 119 66C122 74 114 88 102 92C92 96 78 94 73 86C70 80 71 74 73 70Z" fill="#f8849f"/>
<path d="M96 66C106 60 116 61 119 66C122 74 114 88 102 92C96 94 90 94 86 92C94 86 98 76 96 66Z" fill="#ec4a7c"/>
<path d="M98 70c4 4 10 4 14 0M96 78c5 4 11 3 15-1M92 86c5 3 11 2 15-2M86 80c-1 4 1 8 4 9" stroke="#ffe3ea" stroke-width=".8" fill="none"/>
<!-- green ring -->
<ellipse cx="155.800" cy="93.600" rx="18" ry="12" fill="#0b2a45"/>
<path d="M139 92C146 84 160 82 170 86L166 92C158 88 148 90 142 98Z" fill="#1c6fa6" opacity=".6"/>
<path fill-rule="evenodd" fill="url(#gr)" d="M112.500 95.500a41 33.500 0 1 0 82 0a41 33.500 0 1 0 -82 0ZM138 93.600a17.800 11.900 0 1 1 35.600 0a17.800 11.900 0 1 1 -35.600 0Z"/>
<path d="M122 84C130 70 160 64 184 74" stroke="#c8fba0" stroke-width="3" fill="none" opacity=".6" filter="url(#b2b)"/>
<path d="M134 116C148 124 170 124 186 114" stroke="#b4f882" stroke-width="2.500" fill="none" opacity=".5" filter="url(#b2b)"/>
</svg>
<!--IMG2E-->
</svg>
<!--PAGECONTENT_END-->
</body>
</html>
